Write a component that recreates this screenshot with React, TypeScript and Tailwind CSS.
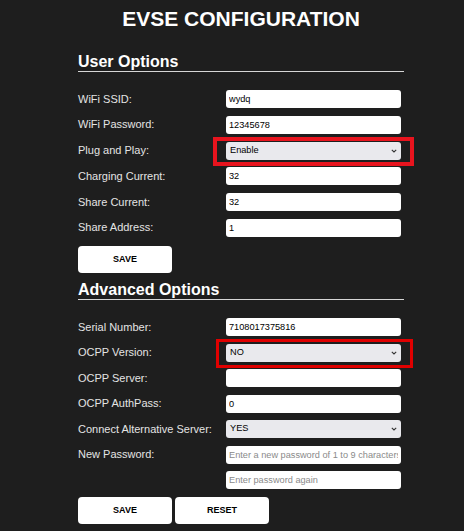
import React from 'react';

const Chevron = () => (
  <svg width="6" height="4" viewBox="0 0 6 4" fill="none" className="shrink-0">
    <path d="M0.8 0.8 L3 3 L5.2 0.8" stroke="#333" strokeWidth="1.1" />
  </svg>
);

const TextField: React.FC<{ value?: string; placeholder?: string }> = ({ value, placeholder }) => (
  <input
    readOnly
    defaultValue={value}
    placeholder={placeholder}
    className="w-[175px] h-[18px] rounded-[3px] bg-white px-[3px] text-[9.2px] text-black outline-none placeholder:text-[#8a8a8a]"
  />
);

const SelectField: React.FC<{ value: string; box?: 'plug' | 'ocpp' }> = ({ value, box }) => (
  <div className="relative flex w-[175px] h-[18px] items-center justify-between rounded-[3px] bg-[#e9e9ed] pl-[4px] pr-[4px] text-[9.2px] text-black">
    <span>{value}</span>
    <Chevron />
    {box === 'plug' && (
      <div className="pointer-events-none absolute left-[-13px] right-[-13px] top-[-5px] bottom-[-6px] border-[4px] border-[#e8141e]" />
    )}
    {box === 'ocpp' && (
      <div className="pointer-events-none absolute left-[-10px] right-[-12px] top-[-5px] bottom-[-6px] border-[3px] border-[#e00000]" />
    )}
  </div>
);

const Row: React.FC<{ label: string; children: React.ReactNode }> = ({ label, children }) => (
  <div className="flex h-[18px] items-center">
    <span className="w-[148px] text-[11px] leading-none text-[#e4e4e4]">{label}</span>
    {children}
  </div>
);

const Button: React.FC<{ label: string }> = ({ label }) => (
  <button className="w-[94px] h-[27px] rounded-[4px] bg-white text-[9px] font-bold text-black">
    {label}
  </button>
);

const Heading: React.FC<{ title: string; className?: string }> = ({ title, className }) => (
  <h2
    className={`text-[16px] leading-[16px] font-bold text-white pb-[1px] border-b border-[#d6d6d6] ${className ?? ''}`}
  >
    {title}
  </h2>
);

export default function App() {
  return (
    <div
      className="min-h-screen bg-[#1e1e1e] overflow-hidden"
      style={{ fontFamily: '"Liberation Sans", Arial, sans-serif' }}
    >
      <div className="ml-[78px] w-[326px]">
        <h1 className="pt-[8px] text-center text-[21px] leading-[21px] font-bold text-white">
          EVSE CONFIGURATION
        </h1>

        <Heading title="User Options" className="mt-[25px]" />
        <div className="mt-[18px] flex flex-col gap-[7.8px]">
          <Row label="WiFi SSID:">
            <TextField value="wydq" />
          </Row>
          <Row label="WiFi Password:">
            <TextField value="12345678" />
          </Row>
          <Row label="Plug and Play:">
            <SelectField value="Enable" box="plug" />
          </Row>
          <Row label="Charging Current:">
            <TextField value="32" />
          </Row>
          <Row label="Share Current:">
            <TextField value="32" />
          </Row>
          <Row label="Share Address:">
            <TextField value="1" />
          </Row>
        </div>
        <div className="mt-[8px]">
          <Button label="SAVE" />
        </div>

        <Heading title="Advanced Options" className="mt-[8.5px]" />
        <div className="mt-[18.5px] flex flex-col gap-[7.5px]">
          <Row label="Serial Number:">
            <TextField value="7108017375816" />
          </Row>
          <Row label="OCPP Version:">
            <SelectField value="NO" box="ocpp" />
          </Row>
          <Row label="OCPP Server:">
            <TextField value="" />
          </Row>
          <Row label="OCPP AuthPass:">
            <TextField value="0" />
          </Row>
          <Row label="Connect Alternative Server:">
            <SelectField value="YES" />
          </Row>
          <Row label="New Password:">
            <TextField placeholder="Enter a new password of 1 to 9 characters" />
          </Row>
          <Row label="">
            <TextField placeholder="Enter password again" />
          </Row>
        </div>
        <div className="mt-[8px] flex gap-[3px]">
          <Button label="SAVE" />
          <Button label="RESET" />
        </div>
      </div>
    </div>
  );
}
